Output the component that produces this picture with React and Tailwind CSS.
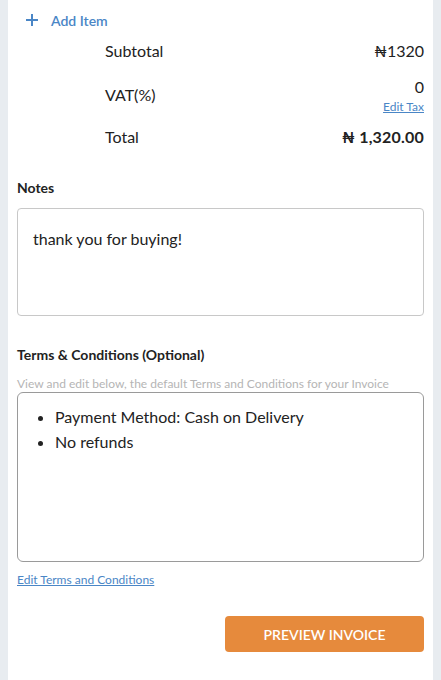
import React from "react";

export default function App() {
  return (
    <div className="min-h-[680px] w-[441px] bg-[#e8ecf0] px-[8px]" style={{ fontFamily: "Lato, 'Noto Sans', sans-serif" }}>
      <div className="min-h-[680px] bg-white px-[9px] pt-[9px]">
        <div className="flex items-center h-[22px]">
          <svg width="14" height="14" viewBox="0 0 14 14" className="ml-[8px]">
            <path d="M7 1v12M1 7h12" stroke="#4a86c6" strokeWidth="2" fill="none" />
          </svg>
          <span className="ml-[12px] text-[14px] font-semibold text-[#4a86c6]">Add Item</span>
        </div>
        <div className="pl-[88px] text-[16px] text-[#222]">
          <div className="flex justify-between items-center h-[22px] mt-[9px]">
            <span>Subtotal</span>
            <span>₦1320</span>
          </div>
          <div className="flex justify-between items-center mt-[10px] h-[46px]">
            <span>VAT(%)</span>
            <div className="flex flex-col items-end">
              <span className="leading-[20px]">0</span>
              <span className="text-[12px] leading-[14px] text-[#4a86c6] underline mt-[3px]">Edit Tax</span>
            </div>
          </div>
          <div className="flex justify-between items-center h-[22px] mt-[8px]">
            <span>Total</span>
            <span className="font-bold tracking-[0.2px]">₦ 1,320.00</span>
          </div>
        </div>
        <div className="mt-[30px] text-[14px] font-bold text-[#222] leading-[20px]">Notes</div>
        <div className="mt-[10px] h-[108px] rounded-[4px] border border-[#c8c8c8] px-[15px] pt-[19px] text-[16px] text-[#222] leading-[22px]">
          thank you for buying!
        </div>
        <div className="mt-[29px] text-[14px] font-bold text-[#222] leading-[20px]">Terms &amp; Conditions (Optional)</div>
        <div className="mt-[12px] text-[12px] text-[#b5b5b5] leading-[14px]">View and edit below, the default Terms and Conditions for your Invoice</div>
        <div className="mt-[1px] h-[170px] rounded-[6px] border border-[#9a9a9a] pt-[11px] pl-[37px] text-[16px] text-[#222]">
          <ul className="list-disc">
            <li className="leading-[25px]">Payment Method: Cash on Delivery</li>
            <li className="leading-[25px]">No refunds</li>
          </ul>
        </div>
        <div className="mt-[11px] text-[12px] leading-[14px] text-[#4a86c6] underline">Edit Terms and Conditions</div>
        <div className="flex justify-end mt-[29px]">
          <button className="w-[199px] h-[36px] rounded-[4px] bg-[#e68a3c] text-white text-[14px] font-semibold">PREVIEW INVOICE</button>
        </div>
      </div>
    </div>
  );
}
